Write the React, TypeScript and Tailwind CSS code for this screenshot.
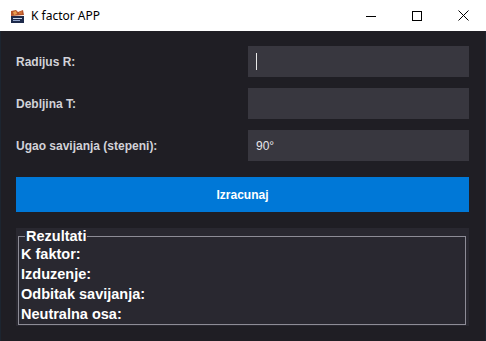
import React from "react";

const AppIcon: React.FC = () => (
  <svg width="15" height="15" viewBox="0 0 15 15">
    <rect x="0" y="0" width="15" height="15" fill="#ffffff" />
    <path d="M1 2 L6 1 L8 3 L13 1 L14 6 L1 7 Z" fill="#b5542a" />
    <path d="M3 3 L6 2 L7 5 L4 6 Z" fill="#e8a050" />
    <path d="M9 3 L12 2 L12 5 L9 5 Z" fill="#d07038" />
    <rect x="1" y="7" width="13" height="7" fill="#1d2a4a" />
    <rect x="3" y="9" width="9" height="1" fill="#c8d4e8" />
    <rect x="3" y="11" width="7" height="1" fill="#8fa2c8" />
  </svg>
);

const TitleBar: React.FC = () => (
  <div className="h-[31px] bg-white flex items-center">
    <div className="ml-[10px] mt-[1px]">
      <AppIcon />
    </div>
    <span
      className="ml-[6px] text-[12px] text-black"
      style={{ fontFamily: '"Noto Sans", "Open Sans", sans-serif' }}
    >
      K factor APP
    </span>
    <div className="ml-auto flex h-full">
      <div className="w-[46px] h-full flex items-center justify-center">
        <svg width="10" height="10" viewBox="0 0 10 10">
          <path d="M0 5.5 H10" stroke="#000" strokeWidth="1" />
        </svg>
      </div>
      <div className="w-[46px] h-full flex items-center justify-center">
        <svg width="10" height="10" viewBox="0 0 10 10">
          <rect x="0.5" y="0.5" width="9" height="9" fill="none" stroke="#000" strokeWidth="1" />
        </svg>
      </div>
      <div className="w-[46px] h-full flex items-center justify-center">
        <svg width="11" height="11" viewBox="0 0 11 11">
          <path d="M0.5 0.5 L10.5 10.5 M10.5 0.5 L0.5 10.5" stroke="#000" strokeWidth="1" />
        </svg>
      </div>
    </div>
  </div>
);

const fields = [
  { label: "Radijus R:", value: "", focused: true },
  { label: "Debljina T:", value: "", focused: false },
  { label: "Ugao savijanja (stepeni):", value: "90°", focused: false },
];

const results = ["K faktor:", "Izduzenje:", "Odbitak savijanja:", "Neutralna osa:"];

export default function App() {
  const sans = { fontFamily: '"Liberation Sans", Arial, sans-serif' };
  return (
    <div className="w-[486px] h-[341px] overflow-hidden bg-[#1f1e24]" style={sans}>
      <TitleBar />
      <div className="h-[310px] border-l border-r border-[#1c2530] pl-[15px] pr-[16px] pt-[15px] flex flex-col">
        <div className="flex flex-col gap-[11px]">
          {fields.map((f) => (
            <div key={f.label} className="flex items-center h-[31px]">
              <span className="w-[232px] text-[12px] font-bold text-[#d2d2d8]">
                {f.label}
              </span>
              <div className="flex-1 h-full bg-[#38373f] flex items-center pl-[8px]">
                {f.focused && <div className="w-[1px] h-[17px] bg-[#e8e8e8]" />}
                {f.value && (
                  <span className="text-[12px] text-[#e6e6ea]">{f.value}</span>
                )}
              </div>
            </div>
          ))}
        </div>
        <button className="mt-[16px] h-[35px] bg-[#0078d7] text-white text-[12px] font-bold">
          Izracunaj
        </button>
        <div className="mt-[16px] bg-[#292830] h-[98px] pl-[2px] pr-[3px]">
          <fieldset className="border border-[#8d8c96] pl-[2px]">
            <legend className="ml-[4px] px-[1px] text-[14.5px] leading-[16px] font-bold text-white">
              Rezultati
            </legend>
            {results.map((r) => (
              <div key={r} className="h-[20px] leading-[20px] text-[14.5px] font-bold text-white">
                {r}
              </div>
            ))}
          </fieldset>
        </div>
      </div>
    </div>
  );
}
